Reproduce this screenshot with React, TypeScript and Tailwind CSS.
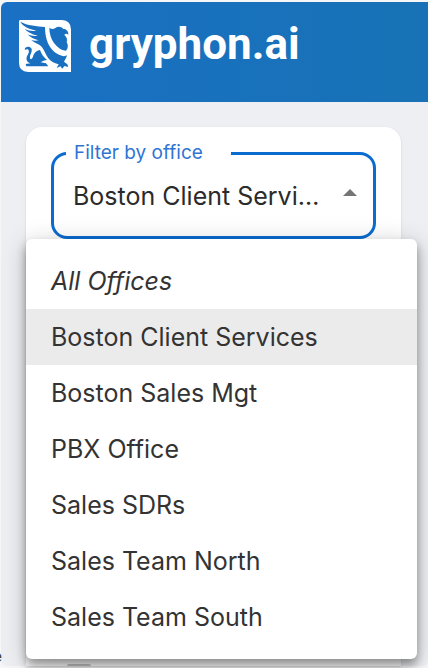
import React, { useState } from "react"
import { clsx } from "clsx"

interface Office {
  value: string
  label: string
}

const OFFICES: Office[] = [
  { value: "all", label: "All Offices" },
  { value: "boston-client-services", label: "Boston Client Services" },
  { value: "boston-sales-mgt", label: "Boston Sales Mgt" },
  { value: "pbx", label: "PBX Office" },
  { value: "sales-sdrs", label: "Sales SDRs" },
  { value: "sales-north", label: "Sales Team North" },
  { value: "sales-south", label: "Sales Team South" },
]

const GryphonMark = () => (
  <svg viewBox="3 6 156 156" className="size-13 shrink-0" aria-hidden="true">
    <path
      fill="#fff"
      d="M5 6H132Q159 8 159 34V162H30Q3 160 3 134V10Z"
    />
    <g fill="#1a70c0">
      {/* wing and foreleg */}
      <path d="M7 11C28 23 56 24 81 27C81 62 92 94 120 109C131 115 141 116 147 112C145 120 141 126 138 131L148 139L151 147L139 144L133 152L127 145L116 150L122 139C108 136 98 130 91 121C84 111 80 99 72 88C64 77 49 76 40 66C48 69 55 69 62 67C48 64 36 58 29 49C39 54 50 55 59 53C40 48 27 41 20 32C31 38 43 40 55 38C33 33 15 25 7 11Z" />
      {/* head and chest */}
      <path d="M94 29C100 34 106 35 112 30C119 24 130 25 135 32C146 33 152 40 151 50C146 46 141 47 139 51C146 57 149 64 146 73C151 81 151 91 144 98C131 98 118 88 108 75C99 62 94 46 94 29Z" />
      {/* hindquarters and tail */}
      <path d="M20 95C20 85 35 83 40 91C45 100 34 112 36 121C38 126 42 123 45 116C48 105 56 97 66 96C70 108 77 118 87 126C80 127 73 129 68 133L84 136L91 145H25L23 138L37 136C27 133 23 124 27 115C31 106 35 101 31 95C28 92 25 95 20 95Z" />
    </g>
  </svg>
)

const Header = () => (
  <header className="flex h-[100px] items-start rounded-tl-md bg-linear-to-r from-[#1a70c4] to-[#1872b5] px-[18px] pt-[18px]">
    <a href="#" className="flex items-start gap-[18px] text-white" aria-label="gryphon.ai">
      <GryphonMark />
      <span className="font-['Roboto',sans-serif] text-[44px] leading-[48px] font-bold">
        gryphon.ai
      </span>
    </a>
  </header>
)

interface OfficeMenuProps {
  selected: string
  onSelect: (value: string) => void
}

const OfficeMenu = ({ selected, onSelect }: OfficeMenuProps) => (
  <ul className="absolute top-28 -right-4 left-0 rounded-md bg-white py-[14px] shadow-[0_6px_10px_rgba(0,0,0,0.36),0_4px_26px_rgba(0,0,0,0.2)]">
    {OFFICES.map((office) => (
      <li key={office.value}>
        <button
          type="button"
          aria-pressed={office.value === selected}
          onClick={() => onSelect(office.value)}
          className={clsx(
            "h-14 w-full px-[25px] text-left text-[25px] leading-8 text-[#333]",
            office.value === "all" && "italic",
            office.value === selected && "bg-[#ebebeb]"
          )}
        >
          {office.label}
        </button>
      </li>
    ))}
  </ul>
)

const OfficeFilter = () => {
  const [office, setOffice] = useState("boston-client-services")

  return (
    <section className="relative flex flex-1 flex-col rounded-t-2xl bg-white px-[25px] pt-4 shadow-sm">
      <fieldset className="h-24 min-w-0 rounded-2xl border-3 border-[#0b6cd0] pr-4 pl-3">
        <legend className="px-2 text-[19px] leading-5 text-[#2f74d3]">
          <label htmlFor="office" className="pr-5">
            Filter by office
          </label>
        </legend>
        <div className="flex h-[66px] items-center gap-4 pl-[7px]">
          <select
            id="office"
            value={office}
            onChange={(e) => setOffice(e.target.value)}
            className="min-w-0 flex-1 appearance-none truncate bg-transparent text-[25px] leading-8 text-[#2b2b2b] outline-none"
          >
            {OFFICES.map((o) => (
              <option key={o.value} value={o.value}>
                {o.label}
              </option>
            ))}
          </select>
          <svg viewBox="0 0 14 7" className="mb-2 h-[7px] w-[14px] shrink-0" aria-hidden="true">
            <path d="M0 7L7 0L14 7Z" fill="#757575" />
          </svg>
        </div>
      </fieldset>
      {/* top edge of the next block in the card */}
      <div className="mt-auto ml-4 h-0.5 w-6 rounded-t-sm bg-[#c4c4c4]" />
      <OfficeMenu selected={office} onSelect={setOffice} />
    </section>
  )
}

export default function App() {
  return (
    <div className="relative flex h-screen flex-col overflow-hidden bg-[#f6f6f7] pt-0.5 pb-0.5 pl-px font-['Inter',sans-serif]">
      <Header />
      <main className="flex flex-1 flex-col rounded-b-md bg-[#eeeff3] pt-[25px] pr-[27px] pl-[25px]">
        <OfficeFilter />
      </main>
      <span className="absolute right-full bottom-0 -mr-0.5 text-base text-[#444]">e</span>
    </div>
  )
}
